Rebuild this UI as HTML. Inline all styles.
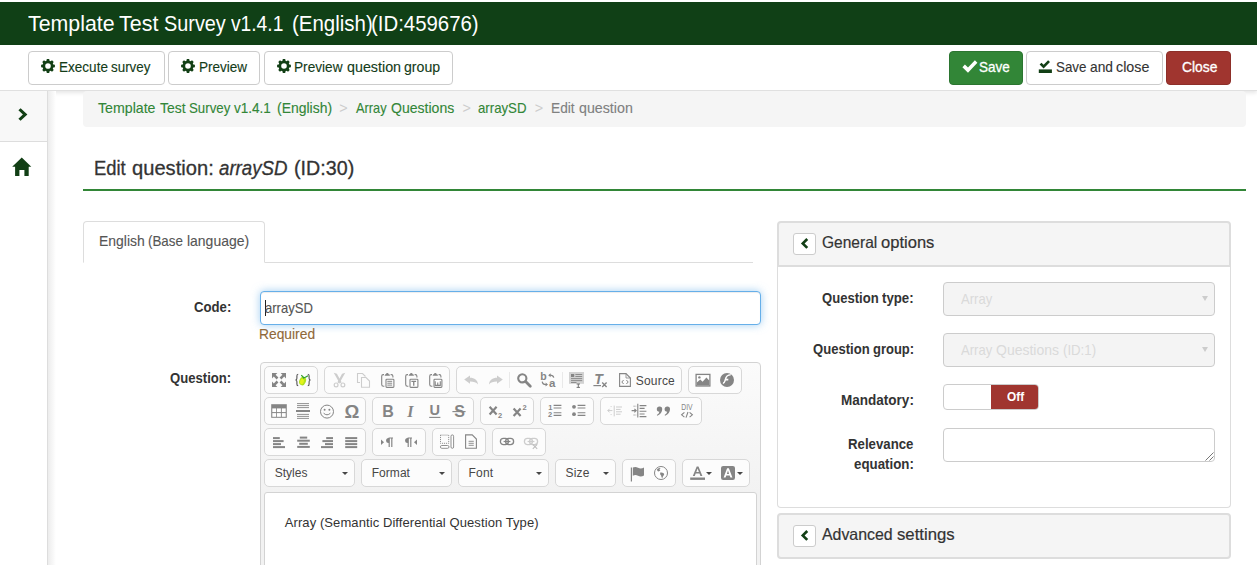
<!DOCTYPE html>
<html lang="en">
<head>
<meta charset="utf-8">
<title>Edit question</title>
<style>
*{box-sizing:border-box;margin:0;padding:0}
html,body{width:1257px;height:565px;overflow:hidden;background:#fff}
body{font-family:"Liberation Sans",sans-serif;font-size:14px;color:#333;position:relative}
.a{position:absolute}
.t{position:absolute;white-space:nowrap}
#titlebar{left:0;top:2px;width:1257px;height:43px;background:#104016}
#btnbar{left:0;top:45px;width:1257px;height:46px;background:#fff;border-bottom:1px solid #e0e0e0;box-shadow:0 2px 4px rgba(0,0,0,.10)}
.btn{position:absolute;top:51px;height:34px;border:1px solid #ccc;border-radius:4px;background:#fff}
#sidebar{left:0;top:91px;width:48px;height:474px;background:#fff;border-right:1px solid #ddd}
#sidetop{left:0;top:91px;width:47px;height:51px;background:#f8f8f8;border-bottom:1px solid #ddd}
#sideshadow{left:48px;top:91px;width:8px;height:474px;background:linear-gradient(to right,#ececec,#fff)}
#bc{left:83px;top:91px;width:1163px;height:36px;background:#f5f5f5;border-radius:4px}
#hr{left:83px;top:189px;width:1163px;height:2px;background:#328637}
#tabline{left:83px;top:262px;width:670px;height:1px;background:#ddd}
#tab{left:83px;top:221px;width:182px;height:42px;border:1px solid #ddd;border-bottom:1px solid #fff;border-radius:4px 4px 0 0;background:#fff}
#code{left:260px;top:291px;width:501px;height:34px;border:1px solid #66afe9;border-radius:4px;background:#fff;box-shadow:inset 0 1px 1px rgba(0,0,0,.075),0 0 8px rgba(102,175,233,.6)}
#caret{left:265px;top:300px;width:1px;height:16px;background:#222}
#cke{left:260px;top:362px;width:501px;height:220px;border:1px solid #d3d3d3;border-radius:4px;background:linear-gradient(to bottom,#fbfbfb,#f2f2f2 130px,#f2f2f2)}
#ckc{left:264px;top:492px;width:493px;height:90px;border:1px solid #d3d3d3;border-radius:3px 3px 0 0;background:#fff}
.grp{position:absolute;height:28px;border:1px solid #d8d8d8;border-radius:5px;background:#fcfcfc}
.sep{position:absolute;width:1px;height:16px;background:#e9e9e9}
.ic{position:absolute;width:16px;height:16px;overflow:visible}
.arr{position:absolute;width:0;height:0;border-left:3px solid transparent;border-right:3px solid transparent;border-top:3px solid #474747}
/* right panel */
#ph1{left:777px;top:221px;width:454px;height:46px;background:#f5f5f5;border:2px solid #ddd;border-radius:4px 4px 0 0}
#pb1{left:777px;top:267px;width:454px;height:241px;background:#fff;border:1px solid #ddd;border-top:none;border-radius:0 0 4px 4px}
#ph2{left:777px;top:513px;width:454px;height:46px;background:#f5f5f5;border:2px solid #ddd;border-radius:4px}
.sb{position:absolute;left:793px;width:23px;height:22px;background:#fff;border:1px solid #ccc;border-radius:3px}
.sel{position:absolute;left:943px;width:272px;height:34px;background:#f4f4f4;border:1px solid #ccc;border-radius:4px}
.selarr{position:absolute;left:1202px;width:0;height:0;border-left:3px solid transparent;border-right:3px solid transparent;border-top:5px solid #ccc}
#sw{left:943px;top:384px;width:96px;height:26px;border:1px solid #ccc;border-radius:4px;background:#fff;overflow:hidden}
#swoff{left:991px;top:385px;width:47px;height:24px;background:#a0352f;border-radius:0 3px 3px 0}
#ta{left:943px;top:428px;width:272px;height:34px;border:1px solid #ccc;border-radius:4px;background:#fff}
</style>
</head>
<body>
<div class="a" id="titlebar"></div>
<div class="a" id="btnbar"></div>
<div class="btn" style="left:28px;width:137px"></div>
<div class="btn" style="left:168px;width:92px"></div>
<div class="btn" style="left:264px;width:189px"></div>
<div class="btn" style="left:949px;width:74px;background:#328637;border-color:#2b7530"></div>
<div class="btn" style="left:1026px;width:137px"></div>
<div class="btn" style="left:1166px;width:65px;background:#a0352f;border-color:#8d2f29"></div>

<div class="a" id="sidebar"></div>
<div class="a" id="sidetop"></div>
<div class="a" id="sideshadow"></div>
<div class="a" id="bc"></div>
<div class="a" id="hr"></div>
<div class="a" id="tabline"></div>
<div class="a" id="tab"></div>
<div class="a" id="code"></div>
<div class="a" id="caret"></div>
<div class="a" id="cke"></div>
<div class="a" id="ckc"></div>

<div class="a" id="ph1"></div>
<div class="a" id="pb1"></div>
<div class="a" id="ph2"></div>
<div class="sb" style="top:233px"></div>
<div class="sb" style="top:525px"></div>
<div class="sel" style="top:282px"></div>
<div class="sel" style="top:333px"></div>
<div class="selarr" style="top:296px"></div>
<div class="selarr" style="top:347px"></div>
<div class="a" id="sw"></div>
<div class="a" id="swoff"></div>
<div class="a" id="ta"></div>
<svg class="a" style="left:1203px;top:450px" width="12" height="12" viewBox="0 0 12 12"><path d="M2.5,10.5 L10.5,2.5 M6.5,10.5 L10.5,6.5" stroke="#777" stroke-width="1" fill="none"/></svg>
<div class="grp" style="left:264px;top:366px;width:54px"></div>
<div class="grp" style="left:324px;top:366px;width:126px"></div>
<div class="grp" style="left:456px;top:366px;width:226px"></div>
<div class="grp" style="left:688px;top:366px;width:54px"></div>
<div class="grp" style="left:264px;top:397px;width:102px"></div>
<div class="grp" style="left:372px;top:397px;width:102px"></div>
<div class="grp" style="left:480px;top:397px;width:54px"></div>
<div class="grp" style="left:540px;top:397px;width:54px"></div>
<div class="grp" style="left:600px;top:397px;width:102px"></div>
<div class="grp" style="left:264px;top:428px;width:102px"></div>
<div class="grp" style="left:372px;top:428px;width:54px"></div>
<div class="grp" style="left:432px;top:428px;width:54px"></div>
<div class="grp" style="left:492px;top:428px;width:54px"></div>
<div class="grp" style="left:264px;top:459px;width:91px"></div>
<div class="grp" style="left:361px;top:459px;width:91px"></div>
<div class="grp" style="left:458px;top:459px;width:91px"></div>
<div class="grp" style="left:555px;top:459px;width:61px"></div>
<div class="grp" style="left:622px;top:459px;width:54px"></div>
<div class="grp" style="left:682px;top:459px;width:68px"></div>
<div class="sep" style="left:509px;top:372px"></div><div class="sep" style="left:562px;top:372px"></div>
<div class="arr" style="left:342px;top:472px"></div>
<div class="arr" style="left:439px;top:472px"></div>
<div class="arr" style="left:536px;top:472px"></div>
<div class="arr" style="left:603px;top:472px"></div>
<div class="arr" style="left:706px;top:472px"></div>
<div class="arr" style="left:737px;top:472px"></div>
<svg class="a" style="left:0;top:0" width="1257" height="565" viewBox="0 0 1257 565">
<path fill="#123f15" fill-rule="evenodd" d="M46.47,60.72 L46.80,59.10 L49.20,59.10 L49.53,60.72 L50.65,61.18 L52.03,60.27 L53.73,61.97 L52.82,63.35 L53.28,64.47 L54.90,64.80 L54.90,67.20 L53.28,67.53 L52.82,68.65 L53.73,70.03 L52.03,71.73 L50.65,70.82 L49.53,71.28 L49.20,72.90 L46.80,72.90 L46.47,71.28 L45.35,70.82 L43.97,71.73 L42.27,70.03 L43.18,68.65 L42.72,67.53 L41.10,67.20 L41.10,64.80 L42.72,64.47 L43.18,63.35 L42.27,61.97 L43.97,60.27 L45.35,61.18Z M45.20,66.00 a2.80,2.80 0 1,0 5.60,0 a2.80,2.80 0 1,0 -5.60,0Z"/>
<path fill="#123f15" fill-rule="evenodd" d="M186.47,60.72 L186.80,59.10 L189.20,59.10 L189.53,60.72 L190.65,61.18 L192.03,60.27 L193.73,61.97 L192.82,63.35 L193.28,64.47 L194.90,64.80 L194.90,67.20 L193.28,67.53 L192.82,68.65 L193.73,70.03 L192.03,71.73 L190.65,70.82 L189.53,71.28 L189.20,72.90 L186.80,72.90 L186.47,71.28 L185.35,70.82 L183.97,71.73 L182.27,70.03 L183.18,68.65 L182.72,67.53 L181.10,67.20 L181.10,64.80 L182.72,64.47 L183.18,63.35 L182.27,61.97 L183.97,60.27 L185.35,61.18Z M185.20,66.00 a2.80,2.80 0 1,0 5.60,0 a2.80,2.80 0 1,0 -5.60,0Z"/>
<path fill="#123f15" fill-rule="evenodd" d="M282.47,60.72 L282.80,59.10 L285.20,59.10 L285.53,60.72 L286.65,61.18 L288.03,60.27 L289.73,61.97 L288.82,63.35 L289.28,64.47 L290.90,64.80 L290.90,67.20 L289.28,67.53 L288.82,68.65 L289.73,70.03 L288.03,71.73 L286.65,70.82 L285.53,71.28 L285.20,72.90 L282.80,72.90 L282.47,71.28 L281.35,70.82 L279.97,71.73 L278.27,70.03 L279.18,68.65 L278.72,67.53 L277.10,67.20 L277.10,64.80 L278.72,64.47 L279.18,63.35 L278.27,61.97 L279.97,60.27 L281.35,61.18Z M281.20,66.00 a2.80,2.80 0 1,0 5.60,0 a2.80,2.80 0 1,0 -5.60,0Z"/>
<path fill="#fff" d="M962.4,67.2 L964.9,64.6 L968.0,67.6 L974.9,60.3 L977.4,62.8 L968.0,72.8 Z"/>
<path fill="#123f15" d="M1039.6,64.6 L1041.5,62.7 L1043.6,64.7 L1048.1,60.2 L1050.0,62.1 L1043.6,68.4 Z"/>
<rect fill="#123f15" x="1038.8" y="69.4" width="13.1" height="3.6"/>
<path fill="#123f15" d="M20.6,108.2 L27.4,114.5 L20.6,120.8 L18.4,118.7 L22.9,114.5 L18.4,110.3 Z"/>
<path fill="#123f15" d="M21.75,157.6 L31.3,166.8 L28.7,166.8 L28.7,175.9 L24.4,175.9 L24.4,170 L19.4,170 L19.4,175.9 L15.1,175.9 L15.1,166.8 L12.2,166.8 Z"/>
<path fill="#123f15" d="M806.3,238.1 L800.9,243.4 L806.3,248.7 L808.2,246.9 L804.6,243.4 L808.2,239.9 Z"/>
<path fill="#123f15" d="M806.3,530.1 L800.9,535.4 L806.3,540.7 L808.2,538.9 L804.6,535.4 L808.2,531.9 Z"/>
<g transform="translate(271,372)"><g fill="#858585"><path d="M1,1 H6.4 L4.6,2.8 L7.4,5.6 L5.6,7.4 L2.8,4.6 L1,6.4 Z"/><g transform="translate(16,0) scale(-1,1)"><path d="M1,1 H6.4 L4.6,2.8 L7.4,5.6 L5.6,7.4 L2.8,4.6 L1,6.4 Z"/></g><g transform="translate(0,16) scale(1,-1)"><path d="M1,1 H6.4 L4.6,2.8 L7.4,5.6 L5.6,7.4 L2.8,4.6 L1,6.4 Z"/></g><g transform="translate(16,16) scale(-1,-1)"><path d="M1,1 H6.4 L4.6,2.8 L7.4,5.6 L5.6,7.4 L2.8,4.6 L1,6.4 Z"/></g></g></g>
<g transform="translate(295,372)"><g fill="none" stroke="#555" stroke-width="1.1"><path d="M3.2,2.2 Q1.8,2.4 1.9,4 V6.2 Q1.9,7.7 0.6,8 Q1.9,8.3 1.9,9.8 V12 Q1.8,13.6 3.2,13.8"/><path d="M12.8,2.2 Q14.2,2.4 14.1,4 V6.2 Q14.1,7.7 15.4,8 Q14.1,8.3 14.1,9.8 V12 Q14.2,13.6 12.8,13.8"/></g><ellipse cx="7.6" cy="9.1" rx="3.3" ry="4.3" transform="rotate(22 7.6 9.1)" fill="#b2e21c"/><ellipse cx="7" cy="9.5" rx="1.9" ry="2.7" transform="rotate(22 7 9.5)" fill="#e4f31a"/><path d="M6.2,3.2 Q8.3,4.6 8.6,6 Q11,5.2 13,3.8" fill="none" stroke="#2e9e2e" stroke-width="1.2"/></g>
<g transform="translate(331,372)"><g fill="#cdcdcd"><path d="M2.7,0.8 L5.9,1.8 L10.6,10.2 L8.8,11.4 Z"/><path d="M14.3,0.8 L11.1,1.8 L6.4,10.2 L8.2,11.4 Z"/></g><g stroke="#cdcdcd" fill="none" stroke-width="1.2"><circle cx="5.1" cy="12.9" r="1.9"/><circle cx="11.9" cy="12.9" r="1.9"/></g></g>
<g transform="translate(355,372)"><g stroke="#cdcdcd" fill="none" stroke-width="1.1"><path d="M5,10.5 H2.5 V1.5 H7.5 L10.5,4.5"/><path d="M6.5,5.5 H11 L14.5,9 V15.3 H6.5 Z"/></g></g>
<g transform="translate(379,372)"><g stroke="#858585" fill="none" stroke-width="1.1"><path d="M5.4,14.3 H4.4 Q2.7,14.3 2.7,12.6 V4.2 Q2.7,2.6 4.2,2.6 H5"/><path d="M11.6,2.6 H12.4 Q13.9,2.6 13.9,4.2 V5.6"/></g><path d="M5.6,3.8 L6.2,2.2 H7 Q7,1 8.3,1 Q9.6,1 9.6,2.2 H10.4 L11,3.8 Z" fill="#858585"/><rect x="7" y="7.2" width="7.9" height="8.2" rx="0.8" fill="#fff" stroke="#858585" stroke-width="1.1"/><path d="M8.3,9.3 H13.2 M8.3,11.2 H13.2 M8.3,13.1 H13.2" stroke="#858585" stroke-width="1"/></g>
<g transform="translate(403,372)"><g stroke="#858585" fill="none" stroke-width="1.1"><path d="M5.4,14.3 H4.4 Q2.7,14.3 2.7,12.6 V4.2 Q2.7,2.6 4.2,2.6 H5"/><path d="M11.6,2.6 H12.4 Q13.9,2.6 13.9,4.2 V5.6"/></g><path d="M5.6,3.8 L6.2,2.2 H7 Q7,1 8.3,1 Q9.6,1 9.6,2.2 H10.4 L11,3.8 Z" fill="#858585"/><rect x="7" y="7.2" width="7.9" height="8.2" rx="0.8" fill="#fff" stroke="#858585" stroke-width="1.1"/><path d="M8.4,9.4 H13.1 M10.75,9.4 V13.8" stroke="#858585" stroke-width="1.3" fill="none"/></g>
<g transform="translate(427,372)"><g stroke="#858585" fill="none" stroke-width="1.1"><path d="M5.4,14.3 H4.4 Q2.7,14.3 2.7,12.6 V4.2 Q2.7,2.6 4.2,2.6 H5"/><path d="M11.6,2.6 H12.4 Q13.9,2.6 13.9,4.2 V5.6"/></g><path d="M5.6,3.8 L6.2,2.2 H7 Q7,1 8.3,1 Q9.6,1 9.6,2.2 H10.4 L11,3.8 Z" fill="#858585"/><rect x="7" y="7.2" width="7.9" height="8.2" rx="0.8" fill="#fff" stroke="#858585" stroke-width="1.1"/><path d="M8.2,9.2 V13.4 H13.3 V9.2 M10.75,10.6 V13.4" stroke="#858585" stroke-width="1.1" fill="none"/></g>
<g transform="translate(463,372)"><path fill="#cdcdcd" d="M1.2,7.6 L7,3.4 V5.8 C11.4,5.8 14.8,8 15,12.6 C13.2,10.4 11,9.6 7,9.6 V11.8 Z"/></g>
<g transform="translate(487,372)"><g transform="translate(17,0) scale(-1,1)"><path fill="#cdcdcd" d="M1.2,7.6 L7,3.4 V5.8 C11.4,5.8 14.8,8 15,12.6 C13.2,10.4 11,9.6 7,9.6 V11.8 Z"/></g></g>
<g transform="translate(516,372)"><circle cx="6.3" cy="6.3" r="4.1" fill="none" stroke="#858585" stroke-width="2.1"/><path d="M9.6,9.6 L14.3,14.3" stroke="#858585" stroke-width="2.8" stroke-linecap="round"/></g>
<g transform="translate(540,372)"><text x="0.3" y="7.6" font-family="Liberation Sans,sans-serif" font-size="10.5" font-weight="bold" fill="#858585">b</text><text x="9" y="15.4" font-family="Liberation Sans,sans-serif" font-size="11.5" font-weight="bold" fill="#858585">a</text><path d="M13.8,5.6 Q13,3 9.6,3.2" fill="none" stroke="#858585" stroke-width="1.2"/><path d="M8.2,3.2 L10.6,1.2 V5.2 Z" fill="#858585"/><path d="M2.2,9.6 Q2.6,12.6 6,12.6" fill="none" stroke="#858585" stroke-width="1.2"/><path d="M8,12.6 L5.6,10.6 V14.6 Z" fill="#858585"/></g>
<g transform="translate(569,372)"><rect x="0" y="0" width="15" height="11.8" fill="#d2d2d2"/><rect x="2" y="2" width="3.2" height="3" fill="#858585"/><path d="M6.4,2.5 H13.2 M6.4,4.5 H13.2 M2,6.6 H13.2 M2,8.6 H13.2 M2,10.5 H7.5" stroke="#858585" stroke-width="0.9"/><path d="M7.6,12 H11 M7.6,15.4 H11 M9.3,12 V15.4" stroke="#666" stroke-width="0.9"/></g>
<g transform="translate(593,372)"><text x="1.2" y="11.6" font-family="Liberation Sans,sans-serif" font-size="14" font-weight="bold" font-style="italic" fill="#858585">T</text><path d="M0.4,13.6 H8" stroke="#858585" stroke-width="1.2"/><path d="M9.2,10.6 L13.6,15 M13.6,10.6 L9.2,15" stroke="#858585" stroke-width="1.4"/></g>
<g transform="translate(617,372)"><path d="M2.6,1.6 H9 L13.4,6 V14.4 H2.6 Z" fill="none" stroke="#858585" stroke-width="1.1"/><path d="M9,1.6 V6 H13.4" fill="none" stroke="#858585" stroke-width="0.8"/><path d="M6.6,8 L4.8,10 L6.6,12 M9.4,8 L11.2,10 L9.4,12" fill="none" stroke="#858585" stroke-width="1"/></g>
<g transform="translate(695,372)"><rect x="1.1" y="2.4" width="13.8" height="11.6" fill="#fff" stroke="#858585" stroke-width="1.3"/><path d="M1.8,13.4 V10.6 L5.2,7.6 L7.6,9.8 L11.4,5.6 L14.2,8.6 V13.4 Z" fill="#858585"/><circle cx="4.4" cy="5.4" r="1.2" fill="#858585"/></g>
<g transform="translate(719,372)"><circle cx="8" cy="8" r="7" fill="#858585"/><path d="M11.6,3.6 Q8.2,3.6 7.4,6.8 L9.4,6.8 L9.2,8.4 L6.9,8.4 Q6,11.6 3.8,12.2 Q3.9,11.4 4,10.6 Q5.2,10 5.6,7.6 Q6.6,2.2 11.8,2 Z" fill="#fff"/></g>
<g transform="translate(271,403)"><rect x="0.2" y="1.2" width="15.6" height="13.6" fill="#858585"/><rect x="1.3" y="5.4" width="3.9" height="3.7" fill="#fff"/><rect x="6.0" y="5.4" width="3.9" height="3.7" fill="#fff"/><rect x="10.8" y="5.4" width="3.9" height="3.7" fill="#fff"/><rect x="1.3" y="10.1" width="3.9" height="3.7" fill="#fff"/><rect x="6.0" y="10.1" width="3.9" height="3.7" fill="#fff"/><rect x="10.8" y="10.1" width="3.9" height="3.7" fill="#fff"/></g>
<g transform="translate(295,403)"><path d="M2,0.6 H14 M2,2.6 H14 M2,4.6 H14 M2,11.4 H14 M2,13.4 H14 M2,15.4 H14" stroke="#858585" stroke-width="0.9"/><path d="M1,8 H15" stroke="#858585" stroke-width="2"/></g>
<g transform="translate(319,403)"><circle cx="8" cy="8.6" r="6.5" fill="none" stroke="#858585" stroke-width="1"/><circle cx="5.6" cy="6.8" r="1" fill="#858585"/><circle cx="10.4" cy="6.8" r="1" fill="#858585"/><path d="M4.6,10.2 Q8,13.4 11.4,10.2" fill="none" stroke="#858585" stroke-width="1"/></g>
<g transform="translate(343,403)"><text x="1.4" y="15" font-family="Liberation Sans,sans-serif" font-size="18.5" font-weight="bold" font-style="normal" fill="#858585">&#937;</text></g>
<g transform="translate(379,403)"><text x="3.3" y="13.7" font-family="Liberation Sans,sans-serif" font-size="16" font-weight="bold" font-style="normal" fill="#858585">B</text></g>
<g transform="translate(403,403)"><text x="4.2" y="13.7" font-family="Liberation Serif,sans-serif" font-size="16" font-weight="bold" font-style="italic" fill="#858585">I</text></g>
<g transform="translate(427,403)"><text x="2.6" y="12.4" font-family="Liberation Sans,sans-serif" font-size="14.5" font-weight="bold" font-style="normal" fill="#858585">U</text><path d="M2.2,14.4 H13.4" stroke="#858585" stroke-width="1.1"/></g>
<g transform="translate(451,403)"><text x="3.2" y="13.7" font-family="Liberation Sans,sans-serif" font-size="16" font-weight="bold" font-style="normal" fill="#858585">S</text><path d="M1.4,8.6 H14.6" stroke="#858585" stroke-width="1.1"/></g>
<g transform="translate(487,403)"><path d="M2.6,3.8 L9.6,11.4 M9.6,3.8 L2.6,11.4" stroke="#858585" stroke-width="2.2"/><text x="11" y="15" font-family="Liberation Sans,sans-serif" font-size="7.5" font-weight="bold" font-style="normal" fill="#858585">2</text></g>
<g transform="translate(511,403)"><path d="M2.6,5.4 L9.6,13 M9.6,5.4 L2.6,13" stroke="#858585" stroke-width="2.2"/><text x="11.4" y="7.4" font-family="Liberation Sans,sans-serif" font-size="7.5" font-weight="bold" font-style="normal" fill="#858585">2</text></g>
<g transform="translate(547,403)"><text x="1.2" y="6.8" font-family="Liberation Sans,sans-serif" font-size="7.5" font-weight="bold" font-style="normal" fill="#858585">1</text><text x="1" y="14.2" font-family="Liberation Sans,sans-serif" font-size="7.5" font-weight="bold" font-style="normal" fill="#858585">2</text><path d="M6.6,2.4 H14.4 M6.6,5 H14.4 M6.6,9.8 H14.4 M6.6,12.4 H14.4" stroke="#858585" stroke-width="1.1"/></g>
<g transform="translate(571,403)"><circle cx="3" cy="3.8" r="1.9" fill="#858585"/><circle cx="3" cy="11.2" r="1.9" fill="#858585"/><path d="M6.6,2.4 H14.4 M6.6,5 H14.4 M6.6,9.8 H14.4 M6.6,12.4 H14.4" stroke="#858585" stroke-width="1.1"/></g>
<g transform="translate(607,403)"><path d="M7.2,2.6 V13.4" stroke="#cdcdcd" stroke-width="1"/><path d="M9,4 H15 M9,6.4 H13.6 M9,8.8 H15 M9,11.2 H13.6" stroke="#cdcdcd" stroke-width="1"/><path d="M0.8,7.6 H5.4 M2.6,5.8 L0.8,7.6 L2.6,9.4" fill="none" stroke="#cdcdcd" stroke-width="1"/><path d="M3.6,3.6 H5.6 M3.6,11.6 H5.6" stroke="#cdcdcd" stroke-width="1" stroke-dasharray="1,1"/></g>
<g transform="translate(631,403)"><path d="M6.8,0.8 V14.6" stroke="#858585" stroke-width="1.1"/><path d="M8.6,2.6 H15.4 M8.6,5.4 H13.6 M8.6,8.2 H15.4 M8.6,11 H13.6 M8.6,13.6 H15.4" stroke="#858585" stroke-width="1.1"/><path d="M0.6,7.6 H5.2 M3.4,5.8 L5.2,7.6 L3.4,9.4" fill="none" stroke="#858585" stroke-width="1.1"/><path d="M2.6,3.2 H5.2 M2.6,12 H5.2" stroke="#858585" stroke-width="1" stroke-dasharray="1,1"/></g>
<g transform="translate(655,403)"><g transform="translate(0.3,-0.2)"><path d="M6.9,6.4 Q6.9,10.8 2,13 L1.5,12.2 Q3.9,10.8 4.1,9 A2.7,2.7 0 1,1 6.9,6.4 Z" fill="#858585"/></g><g transform="translate(8.1,-0.2)"><path d="M6.9,6.4 Q6.9,10.8 2,13 L1.5,12.2 Q3.9,10.8 4.1,9 A2.7,2.7 0 1,1 6.9,6.4 Z" fill="#858585"/></g></g>
<g transform="translate(679,403)"><text x="2.2" y="7.4" font-family="Liberation Sans,sans-serif" font-size="8.5" font-weight="normal" font-style="normal" fill="#858585" textLength="11.4" lengthAdjust="spacingAndGlyphs">DIV</text><path d="M5.4,9.4 L2.6,11.8 L5.4,14.2 M10.6,9.4 L13.4,11.8 L10.6,14.2 M9,9 L7,14.6" fill="none" stroke="#858585" stroke-width="1.1"/></g>
<g transform="translate(271,434)"><rect x="2.0" y="3.1" width="6.8" height="2" fill="#858585"/><rect x="2.0" y="6.1" width="10.6" height="2" fill="#858585"/><rect x="2.0" y="9.1" width="8.0" height="2" fill="#858585"/><rect x="2.0" y="12.1" width="12.0" height="2" fill="#858585"/></g>
<g transform="translate(295,434)"><rect x="4.8" y="2.6" width="7.4" height="2" fill="#858585"/><rect x="2.2" y="5.7" width="12.6" height="2" fill="#858585"/><rect x="4.2" y="8.8" width="8.6" height="2" fill="#858585"/><rect x="2.2" y="11.9" width="12.6" height="2" fill="#858585"/></g>
<g transform="translate(319,434)"><rect x="7.2" y="3.1" width="6.8" height="2" fill="#858585"/><rect x="3.4" y="6.1" width="10.6" height="2" fill="#858585"/><rect x="6.0" y="9.1" width="8.0" height="2" fill="#858585"/><rect x="2.0" y="12.1" width="12.0" height="2" fill="#858585"/></g>
<g transform="translate(343,434)"><rect x="2.2" y="3.1" width="12.0" height="2" fill="#858585"/><rect x="2.2" y="6.1" width="12.0" height="2" fill="#858585"/><rect x="2.2" y="9.1" width="12.0" height="2" fill="#858585"/><rect x="2.2" y="12.1" width="12.0" height="2" fill="#858585"/></g>
<g transform="translate(379,434)"><path d="M2,5.4 L5,8.2 L2,11 Z" fill="#858585"/><path d="M10.2,4 V13 M12.8,4 V13 M9.6,4 H14" stroke="#858585" stroke-width="1.2" fill="none"/><path d="M10.2,4 H9.6 a2.5,2.5 0 0,0 0,5 H10.2 Z" fill="#858585"/></g>
<g transform="translate(403,434)"><path d="M14,5.4 L11,8.2 L14,11 Z" fill="#858585"/><path d="M5.2,4 V13 M7.8,4 V13 M4.6,4 H9" stroke="#858585" stroke-width="1.2" fill="none"/><path d="M5.2,4 H4.6 a2.5,2.5 0 0,0 0,5 H5.2 Z" fill="#858585"/></g>
<g transform="translate(439,433.5)"><rect x="1.5" y="1.6" width="8.2" height="8.2" fill="none" stroke="#858585" stroke-width="1" stroke-dasharray="1,1"/><rect x="12" y="1.4" width="2.6" height="13.4" rx="1.3" fill="#fff" stroke="#858585" stroke-width="0.9"/><rect x="1.4" y="12" width="8.6" height="2.8" rx="1.4" fill="#fff" stroke="#858585" stroke-width="0.9"/></g>
<g transform="translate(463,433.5)"><path d="M2.6,1.4 H9.2 L13.4,5.6 V14.8 H2.6 Z" fill="none" stroke="#858585" stroke-width="1.1"/><path d="M5.6,7.8 H10.8 M5.6,9.8 H10.8 M5.6,11.8 H10.8" stroke="#858585" stroke-width="0.9"/></g>
<g transform="translate(499,434)"><rect x="1.4" y="4.4" width="8" height="6.2" rx="3.1" fill="none" stroke="#858585" stroke-width="1.3"/><rect x="6.6" y="4.4" width="8" height="6.2" rx="3.1" fill="none" stroke="#858585" stroke-width="1.3"/><path d="M4.6,7.5 H11.4" stroke="#858585" stroke-width="1.2"/></g>
<g transform="translate(523,434)"><rect x="1.4" y="4.4" width="8" height="6.2" rx="3.1" fill="none" stroke="#cdcdcd" stroke-width="1.3"/><rect x="6.6" y="4.4" width="8" height="6.2" rx="3.1" fill="none" stroke="#cdcdcd" stroke-width="1.3"/><path d="M4.6,7.5 H11.4" stroke="#cdcdcd" stroke-width="1.2"/><path d="M9.8,10.4 L14.2,14.8 M14.2,10.4 L9.8,14.8" stroke="#bdbdbd" stroke-width="1.1"/></g>
<g transform="translate(630,465)"><path d="M1.4,2.4 V16.4" stroke="#858585" stroke-width="1.2"/><path d="M2.8,2.6 Q5.4,1.2 8,2.8 Q10.8,4.4 14,2.6 V10.6 Q10.8,12.4 8,10.8 Q5.4,9.4 2.8,10.8 Z" fill="#858585"/></g>
<g transform="translate(653,465)"><circle cx="8" cy="8" r="6.5" fill="#fff" stroke="#858585" stroke-width="1"/><path d="M4,4.2 Q6,2.6 7.6,3 L6.4,4.6 L7.4,5.6 L5.6,6.6 L4.4,6 Z" fill="#858585"/><path d="M7.2,7.6 Q9,7 10.6,8.2 Q11.8,9.2 10.6,10.4 Q9.6,11.4 9.4,13.2 Q8.2,12.6 8.2,10.8 Q6.6,9.6 7.2,7.6 Z" fill="#858585"/></g>
<g transform="translate(689.6,465.6)"><path d="M3.2,10.4 L7.1,0.8 H8.9 L12.8,10.4 H10.8 L9.9,8 H6.1 L5.2,10.4 Z M6.7,6.4 H9.3 L8,2.9 Z" fill="#858585" fill-rule="evenodd"/><rect x="0.6" y="11.9" width="14.8" height="2.4" fill="#858585"/></g>
<g transform="translate(720,465)"><rect x="1" y="0.9" width="14" height="14" rx="2.2" fill="#858585"/><path d="M3.6,12.6 L7.1,3.2 H8.9 L12.4,12.6 H10.4 L9.7,10.6 H6.3 L5.6,12.6 Z M6.9,8.9 H9.1 L8,5.6 Z" fill="#fff" fill-rule="evenodd"/></g>
</svg>

<span class="t" style="left:27.56px;top:10px;font-size:21.8px;line-height:28px;color:#fff;letter-spacing:0.000px;transform-origin:0 0;transform:scaleX(0.9786);">Template</span>
<span class="t" style="left:118.73px;top:10px;font-size:21.8px;line-height:28px;color:#fff;letter-spacing:0.000px;transform-origin:0 0;transform:scaleX(0.9842);">Test</span>
<span class="t" style="left:163.81px;top:10px;font-size:21.8px;line-height:28px;color:#fff;letter-spacing:0.000px;transform-origin:0 0;transform:scaleX(0.9108);">Survey</span>
<span class="t" style="left:231.15px;top:10px;font-size:21.8px;line-height:28px;color:#fff;letter-spacing:0.000px;transform-origin:0 0;transform:scaleX(0.8810);">v1.4.1</span>
<span class="t" style="left:291.80px;top:10px;font-size:21.8px;line-height:28px;color:#fff;letter-spacing:0.000px;transform-origin:0 0;transform:scaleX(0.9382);">(English)</span>
<span class="t" style="left:371.10px;top:10px;font-size:21.8px;line-height:28px;color:#fff;letter-spacing:0.000px;transform-origin:0 0;transform:scaleX(0.9353);">(ID:459676)</span>
<span class="t" style="left:58.66px;top:58px;font-size:14.4px;line-height:19px;color:#143c19;letter-spacing:0.000px;transform-origin:0 0;transform:scaleX(0.9408);-webkit-text-stroke:0.12px #143c19;">Execute</span>
<span class="t" style="left:111.47px;top:58px;font-size:14.4px;line-height:19px;color:#143c19;letter-spacing:0.000px;transform-origin:0 0;transform:scaleX(0.9296);-webkit-text-stroke:0.12px #143c19;">survey</span>
<span class="t" style="left:198.96px;top:58px;font-size:14.4px;line-height:19px;color:#143c19;letter-spacing:0.000px;transform-origin:0 0;transform:scaleX(0.9405);-webkit-text-stroke:0.12px #143c19;">Preview</span>
<span class="t" style="left:293.65px;top:58px;font-size:14.4px;line-height:19px;color:#143c19;letter-spacing:0.000px;transform-origin:0 0;transform:scaleX(0.9487);-webkit-text-stroke:0.12px #143c19;">Preview</span>
<span class="t" style="left:347.09px;top:58px;font-size:14.4px;line-height:19px;color:#143c19;letter-spacing:0.000px;transform-origin:0 0;transform:scaleX(0.9932);-webkit-text-stroke:0.12px #143c19;">question</span>
<span class="t" style="left:403.91px;top:58px;font-size:14.4px;line-height:19px;color:#143c19;letter-spacing:0.000px;transform-origin:0 0;transform:scaleX(0.9811);-webkit-text-stroke:0.12px #143c19;">group</span>
<span class="t" style="left:979.25px;top:58px;font-size:14.4px;line-height:19px;color:#fff;letter-spacing:0.000px;transform-origin:0 0;transform:scaleX(0.9379);-webkit-text-stroke:0.3px #fff;">Save</span>
<span class="t" style="left:1055.59px;top:58px;font-size:14.4px;line-height:19px;color:#333;letter-spacing:0.000px;transform-origin:0 0;transform:scaleX(0.9270);-webkit-text-stroke:0.12px #333;">Save</span>
<span class="t" style="left:1089.93px;top:58px;font-size:14.4px;line-height:19px;color:#333;letter-spacing:0.000px;transform-origin:0 0;transform:scaleX(0.9570);-webkit-text-stroke:0.12px #333;">and</span>
<span class="t" style="left:1116.27px;top:58px;font-size:14.4px;line-height:19px;color:#333;letter-spacing:0.000px;transform-origin:0 0;transform:scaleX(0.9925);-webkit-text-stroke:0.12px #333;">close</span>
<span class="t" style="left:1182.20px;top:58px;font-size:14.4px;line-height:19px;color:#fff;letter-spacing:0.000px;transform-origin:0 0;transform:scaleX(0.9635);-webkit-text-stroke:0.3px #fff;">Close</span>
<span class="t" style="left:98.18px;top:99px;font-size:14.4px;line-height:19px;color:#328637;letter-spacing:0.000px;transform-origin:0 0;transform:scaleX(0.9846);-webkit-text-stroke:0.12px #328637;">Template</span>
<span class="t" style="left:160.10px;top:99px;font-size:14.4px;line-height:19px;color:#328637;letter-spacing:0.000px;transform-origin:0 0;transform:scaleX(0.9687);-webkit-text-stroke:0.12px #328637;">Test</span>
<span class="t" style="left:189.44px;top:99px;font-size:14.4px;line-height:19px;color:#328637;letter-spacing:0.000px;transform-origin:0 0;transform:scaleX(0.9213);-webkit-text-stroke:0.12px #328637;">Survey</span>
<span class="t" style="left:234.48px;top:99px;font-size:14.4px;line-height:19px;color:#328637;letter-spacing:0.000px;transform-origin:0 0;transform:scaleX(0.9409);-webkit-text-stroke:0.12px #328637;">v1.4.1</span>
<span class="t" style="left:276.53px;top:99px;font-size:14.4px;line-height:19px;color:#328637;letter-spacing:0.000px;transform-origin:0 0;transform:scaleX(0.9702);-webkit-text-stroke:0.12px #328637;">(English)</span>
<span class="t" style="left:339.19px;top:99px;font-size:14.4px;line-height:19px;color:#ccc;letter-spacing:0.000px;">&gt;</span>
<span class="t" style="left:355.58px;top:99px;font-size:14.4px;line-height:19px;color:#328637;letter-spacing:0.000px;transform-origin:0 0;transform:scaleX(0.8874);-webkit-text-stroke:0.12px #328637;">Array</span>
<span class="t" style="left:391.28px;top:99px;font-size:14.4px;line-height:19px;color:#328637;letter-spacing:0.000px;transform-origin:0 0;transform:scaleX(0.9755);-webkit-text-stroke:0.12px #328637;">Questions</span>
<span class="t" style="left:462.60px;top:99px;font-size:14.4px;line-height:19px;color:#ccc;letter-spacing:0.000px;">&gt;</span>
<span class="t" style="left:477.94px;top:99px;font-size:14.4px;line-height:19px;color:#328637;letter-spacing:0.000px;transform-origin:0 0;transform:scaleX(0.9178);-webkit-text-stroke:0.12px #328637;">arraySD</span>
<span class="t" style="left:534.80px;top:99px;font-size:14.4px;line-height:19px;color:#ccc;letter-spacing:0.000px;">&gt;</span>
<span class="t" style="left:550.95px;top:99px;font-size:14.4px;line-height:19px;color:#808080;letter-spacing:0.000px;transform-origin:0 0;transform:scaleX(0.9510);-webkit-text-stroke:0.12px #808080;">Edit</span>
<span class="t" style="left:578.94px;top:99px;font-size:14.4px;line-height:19px;color:#808080;letter-spacing:0.000px;transform-origin:0 0;transform:scaleX(0.9890);-webkit-text-stroke:0.12px #808080;">question</span>
<span class="t" style="left:93.64px;top:155px;font-size:20px;line-height:26px;color:#333;letter-spacing:0.000px;transform-origin:0 0;transform:scaleX(0.9201);-webkit-text-stroke:0.3px #333;">Edit</span>
<span class="t" style="left:132.43px;top:155px;font-size:20px;line-height:26px;color:#333;letter-spacing:0.000px;transform-origin:0 0;transform:scaleX(1.0070);-webkit-text-stroke:0.3px #333;">question:</span>
<span class="t" style="left:219.43px;top:155px;font-size:20px;line-height:26px;color:#333;letter-spacing:0.000px;transform-origin:0 0;transform:scaleX(0.9332);-webkit-text-stroke:0.3px #333;"><i>arraySD</i></span>
<span class="t" style="left:293.84px;top:155px;font-size:20px;line-height:26px;color:#333;letter-spacing:0.000px;transform-origin:0 0;transform:scaleX(0.9848);-webkit-text-stroke:0.3px #333;">(ID:30)</span>
<span class="t" style="left:99.04px;top:232px;font-size:14.4px;line-height:19px;color:#555;letter-spacing:0.000px;transform-origin:0 0;transform:scaleX(0.9692);-webkit-text-stroke:0.12px #555;">English</span>
<span class="t" style="left:147.57px;top:232px;font-size:14.4px;line-height:19px;color:#555;letter-spacing:0.000px;transform-origin:0 0;transform:scaleX(0.9282);-webkit-text-stroke:0.12px #555;">(Base</span>
<span class="t" style="left:186.50px;top:232px;font-size:14.4px;line-height:19px;color:#555;letter-spacing:0.000px;transform-origin:0 0;transform:scaleX(0.9695);-webkit-text-stroke:0.12px #555;">language)</span>
<span class="t" style="left:194.08px;top:298px;font-size:14.4px;line-height:19px;color:#333;letter-spacing:0.000px;font-weight:bold;transform-origin:0 0;transform:scaleX(0.9142);">Code:</span>
<span class="t" style="left:265.12px;top:299px;font-size:14.4px;line-height:19px;color:#555;letter-spacing:0.000px;transform-origin:0 0;transform:scaleX(0.9060);-webkit-text-stroke:0.12px #555;">arraySD</span>
<span class="t" style="left:258.81px;top:325px;font-size:14.4px;line-height:19px;color:#90693a;letter-spacing:0.000px;transform-origin:0 0;transform:scaleX(0.9604);-webkit-text-stroke:0.12px #90693a;">Required</span>
<span class="t" style="left:169.80px;top:369px;font-size:14.4px;line-height:19px;color:#333;letter-spacing:0.000px;font-weight:bold;transform-origin:0 0;transform:scaleX(0.9107);">Question:</span>
<span class="t" style="left:821.93px;top:232px;font-size:16.5px;line-height:21px;color:#333;letter-spacing:0.000px;transform-origin:0 0;transform:scaleX(0.9418);-webkit-text-stroke:0.2px #333;">General</span>
<span class="t" style="left:880.58px;top:232px;font-size:16.5px;line-height:21px;color:#333;letter-spacing:0.000px;transform-origin:0 0;transform:scaleX(1.0027);-webkit-text-stroke:0.2px #333;">options</span>
<span class="t" style="left:822.00px;top:289px;font-size:14.4px;line-height:19px;color:#333;letter-spacing:0.000px;font-weight:bold;transform-origin:0 0;transform:scaleX(0.9079);">Question</span>
<span class="t" style="left:882.47px;top:289px;font-size:14.4px;line-height:19px;color:#333;letter-spacing:0.000px;font-weight:bold;transform-origin:0 0;transform:scaleX(0.9205);">type:</span>
<span class="t" style="left:961.05px;top:290px;font-size:14.4px;line-height:19px;color:#dadada;letter-spacing:0.000px;transform-origin:0 0;transform:scaleX(0.9067);">Array</span>
<span class="t" style="left:813.27px;top:340px;font-size:14.4px;line-height:19px;color:#333;letter-spacing:0.000px;font-weight:bold;transform-origin:0 0;transform:scaleX(0.9082);">Question</span>
<span class="t" style="left:873.06px;top:340px;font-size:14.4px;line-height:19px;color:#333;letter-spacing:0.000px;font-weight:bold;transform-origin:0 0;transform:scaleX(0.9018);">group:</span>
<span class="t" style="left:961.05px;top:341px;font-size:14.4px;line-height:19px;color:#dadada;letter-spacing:0.000px;transform-origin:0 0;transform:scaleX(0.9067);">Array</span>
<span class="t" style="left:996.02px;top:341px;font-size:14.4px;line-height:19px;color:#dadada;letter-spacing:0.000px;transform-origin:0 0;transform:scaleX(0.9721);">Questions</span>
<span class="t" style="left:1063.19px;top:341px;font-size:14.4px;line-height:19px;color:#dadada;letter-spacing:0.000px;transform-origin:0 0;transform:scaleX(0.9187);">(ID:1)</span>
<span class="t" style="left:841.40px;top:391px;font-size:14.4px;line-height:19px;color:#333;letter-spacing:0.000px;font-weight:bold;transform-origin:0 0;transform:scaleX(0.9398);">Mandatory:</span>
<span class="t" style="left:1006.66px;top:389px;font-size:12.4px;line-height:16px;color:#fff;letter-spacing:0.000px;font-weight:bold;transform-origin:0 0;transform:scaleX(0.9568);">Off</span>
<span class="t" style="left:847.88px;top:435px;font-size:14.4px;line-height:19px;color:#333;letter-spacing:0.000px;font-weight:bold;transform-origin:0 0;transform:scaleX(0.9194);">Relevance</span>
<span class="t" style="left:853.85px;top:455px;font-size:14.4px;line-height:19px;color:#333;letter-spacing:0.000px;font-weight:bold;transform-origin:0 0;transform:scaleX(0.9246);">equation:</span>
<span class="t" style="left:821.64px;top:524px;font-size:16.5px;line-height:21px;color:#333;letter-spacing:0.000px;transform-origin:0 0;transform:scaleX(0.9627);-webkit-text-stroke:0.2px #333;">Advanced</span>
<span class="t" style="left:896.62px;top:524px;font-size:16.5px;line-height:21px;color:#333;letter-spacing:0.000px;transform-origin:0 0;transform:scaleX(1.0135);-webkit-text-stroke:0.2px #333;">settings</span>
<span class="t" style="left:635.81px;top:373px;font-size:12px;line-height:16px;color:#474747;letter-spacing:0.185px;">Source</span>
<span class="t" style="left:274.66px;top:465px;font-size:12px;line-height:16px;color:#474747;letter-spacing:0.024px;">Styles</span>
<span class="t" style="left:371.64px;top:465px;font-size:12px;line-height:16px;color:#474747;letter-spacing:0.066px;">Format</span>
<span class="t" style="left:468.51px;top:465px;font-size:12px;line-height:16px;color:#474747;letter-spacing:0.231px;">Font</span>
<span class="t" style="left:565.44px;top:465px;font-size:12px;line-height:16px;color:#474747;letter-spacing:0.193px;">Size</span>
<span class="t" style="left:284.74px;top:514px;font-size:13px;line-height:17px;color:#333;letter-spacing:0.086px;">Array (Semantic Differential Question Type)</span>

</body>
</html>
